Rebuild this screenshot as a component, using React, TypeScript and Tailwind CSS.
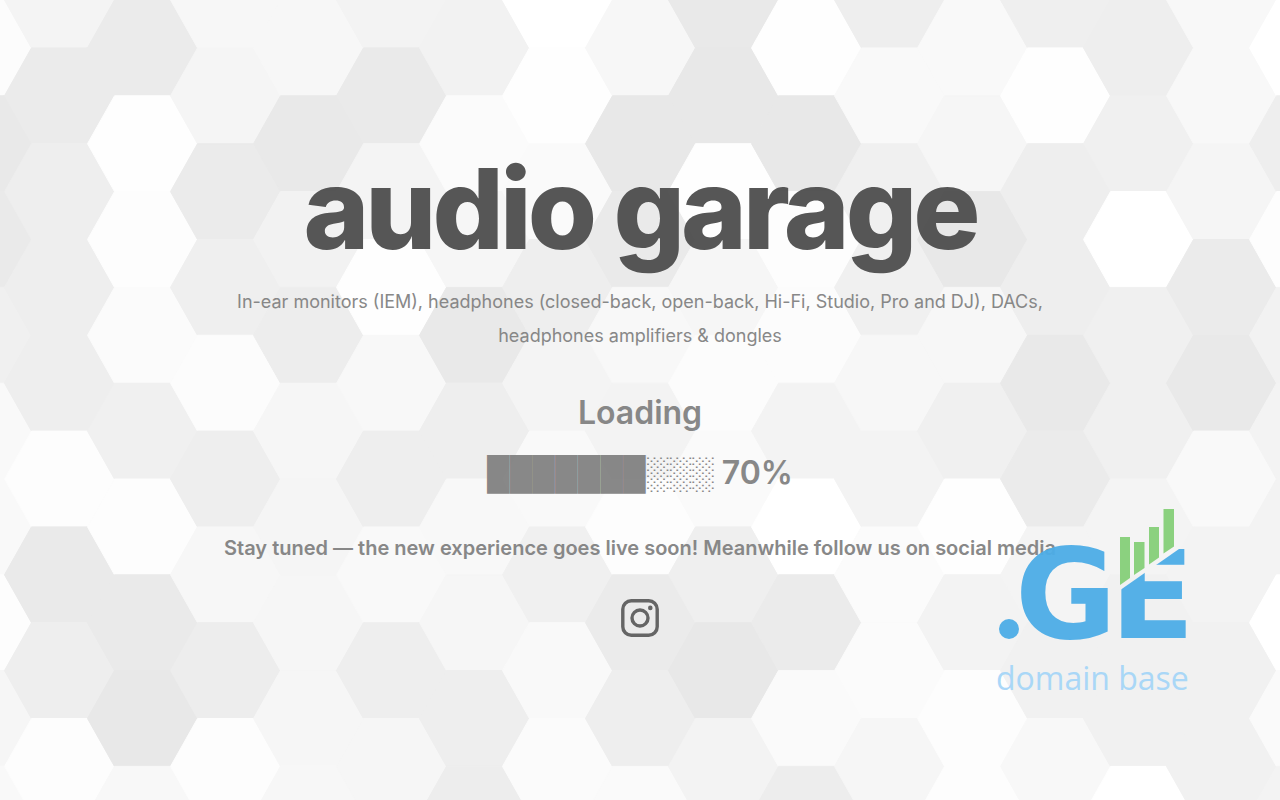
const COLUMN_STEP = 83;
const ROW_STEP = 95.8;

// Grey level of every hexagon, one string per column, two hex digits per cell.
const COLUMNS = [
  "fc e9 ea f0 f9 f9 fd f6 f9",
  "f4 eb ee ee ee fd ea ee fd",
  "eb fe fd fb f0 fd ea e8 f8",
  "f7 f5 eb ef fc ee f7 ed fd",
  "f7 e9 f2 ed f6 f5 f6 f6 f7",
  "f3 ea f4 fe f8 ee f9 ee f6",
  "f2 fb f6 e9 ee f8 f6 ee ed",
  "ff fe fa ee f4 f9 f0 f9 fb",
  "f7 e8 ea f8 f3 fd eb ee fa",
  "e9 e8 fe f6 fc fa ef e8 f3",
  "fe e8 fd fc f3 ff eb fa ed",
  "ee f9 f0 f0 f7 f3 fb fb f6",
  "f9 f6 e8 f7 f0 fe f3 fd fd",
  "ef fe ee ee e9 eb f4 f1 f8",
  "ee f0 ff f0 f0 f4 f1 f1 ff",
  "f8 f8 f5 eb e9 f9 f3 f1 f1",
  "ff ee fd f2 f3 f3 ff fa f3",
];

function hexPoints(cx: number, cy: number) {
  const h = ROW_STEP / 2;
  return [
    [cx - 55, cy],
    [cx - 28, cy - h],
    [cx + 28, cy - h],
    [cx + 55, cy],
    [cx + 28, cy + h],
    [cx - 28, cy + h],
  ]
    .map((p) => p.join(","))
    .join(" ");
}

function HexBackground() {
  return (
    <svg
      className="absolute inset-0 h-full w-full"
      viewBox="0 0 1280 800"
      preserveAspectRatio="xMidYMid slice"
      aria-hidden="true"
    >
      <rect width="1280" height="800" fill="#f4f4f4" />
      {COLUMNS.map((column, i) =>
        column.split(" ").map((level, r) => {
          const cx = -23.5 + i * COLUMN_STEP;
          const cy = r * ROW_STEP + (i % 2 === 0 ? ROW_STEP / 2 : 0);
          const fill = `#${level}${level}${level}`;
          return (
            <polygon key={`${i}-${r}`} points={hexPoints(cx, cy)} fill={fill} stroke={fill} strokeWidth="1" />
          );
        })
      )}
    </svg>
  );
}

function DomainLogo() {
  return (
    <svg width="204" height="196" viewBox="0 0 204 196" role="img" aria-label=".GE domain base">
      <defs>
        <clipPath id="below-slope">
          <path d="M120 85 L183 41 H204 V140 H120 Z" />
        </clipPath>
      </defs>
      <g fill="#4dade7" fontFamily="'DejaVu Sans', sans-serif" fontWeight="700" fontSize="124">
        <circle cx="13" cy="121" r="10" />
        <text x="19" y="130">
          G
        </text>
        <g clipPath="url(#below-slope)">
          <text x="114" y="130">
            E
          </text>
        </g>
      </g>
      <g fill="#86d079">
        <path d="M124 29 H134 V70 L124 77 Z" />
        <path d="M138 34 H148.5 V60 L138 67 Z" />
        <path d="M153 19 H163 V49.5 L153 56.5 Z" />
        <path d="M167.5 1 H178 V38.5 L167.5 45.5 Z" />
      </g>
      <text x="0" y="182" fill="#a6d6f8" fontFamily="'Open Sans', sans-serif" fontSize="32">
        domain base
      </text>
    </svg>
  );
}

function InstagramIcon() {
  return (
    <svg width="38" height="38" viewBox="0 0 38 38" fill="none" stroke="#5e5e5e" aria-hidden="true">
      <rect x="1.8" y="1.8" width="34.4" height="34.4" rx="8.5" strokeWidth="3.4" />
      <circle cx="19" cy="19" r="8" strokeWidth="3.4" />
      <circle cx="29.3" cy="8.9" r="2.3" fill="#5e5e5e" stroke="none" />
    </svg>
  );
}

export default function App() {
  return (
    <div className="relative min-h-screen overflow-hidden bg-[#f4f4f4] font-['Inter',sans-serif] text-[#828282]">
      <HexBackground />

      <main className="relative flex min-h-screen flex-col items-center justify-center px-6 text-center opacity-95">
        <h1 className="mb-2 text-[112px] leading-[138px] font-extrabold tracking-[-4px] text-[#4e4e4e]">
          audio garage
        </h1>
        <p className="max-w-[860px] text-[18px] leading-[34px]">
          In-ear monitors (IEM), headphones (closed-back, open-back, Hi-Fi, Studio, Pro and DJ), DACs, headphones
          amplifiers &amp; dongles
        </p>

        <h2 className="mt-10 text-[32px] leading-[40px] font-semibold">Loading</h2>
        <p className="mt-5 text-[32px] leading-[40px] font-semibold">███████░░░ 70%</p>

        <p className="mt-10 text-[20px] leading-[30px] font-semibold">
          Stay tuned — the new experience goes live soon! Meanwhile follow us on social media
        </p>

        <a href="#instagram" aria-label="Instagram" className="mt-9 mb-6">
          <InstagramIcon />
        </a>
      </main>

      <a href="#domain-base" className="absolute right-20 bottom-24 opacity-95">
        <DomainLogo />
      </a>
    </div>
  );
}
